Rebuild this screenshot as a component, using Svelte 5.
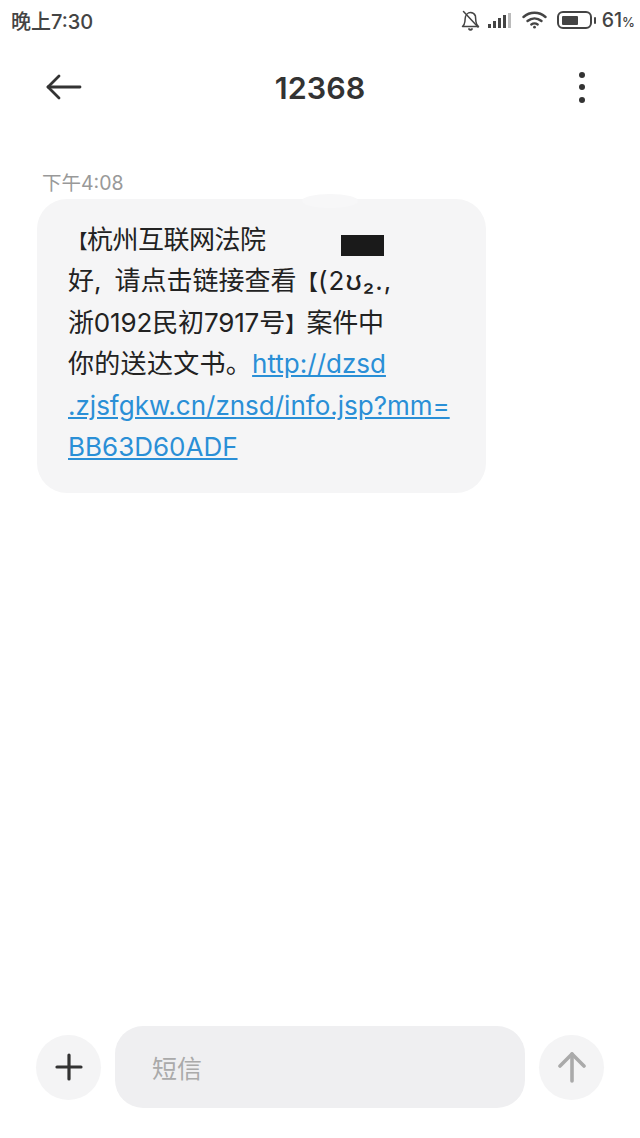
<script lang="ts">
	const statusTime = '晚上7:30';
	const bars = [4, 7, 10, 13, 15];
</script>

<div class="phone">
	<div class="status">
		<span class="time">{statusTime}</span>
		<div class="status__icons">
			<svg class="bell" width="20" height="21" viewBox="0 0 20 21" fill="none" stroke="#444" stroke-width="1.5" stroke-linecap="round" stroke-linejoin="round">
				<path d="M1.500 16.500c1.600-1.400 2.200-2.600 2.400-5l.3-3.200C4.500 5 6.800 2.600 9.500 2.600c2.200 0 4 1.300 4.900 3.300l.5 5.600c.2 2.300 1 3.700 2.600 5z" />
				<path d="M8 19c.6 1 2.400 1 3 0" stroke-width="1.800" />
				<path d="M2.500 1.500 17 17" />
			</svg>
			<div class="signal">
				{#each bars as h, i}
					<span class:dim={i === 4} style="height: {h}px"></span>
				{/each}
			</div>
			<svg class="wifi" width="25" height="18" viewBox="0 0 25 18" fill="none" stroke="#444" stroke-width="2.400" stroke-linecap="round">
				<path d="M1.500 6C7.900 .4 17.100 .4 23.500 6" />
				<path d="M5.500 10c4.200-3.400 9.800-3.400 14 0" />
				<path d="M9.300 13.400c2-1.300 4.400-1.300 6.400 0" />
				<circle cx="12.500" cy="16.200" r="1.400" fill="#444" stroke="none" />
			</svg>
			<div class="battery">
				<div class="battery__shell"><div class="battery__level"></div></div>
				<span class="battery__tip"></span>
			</div>
			<span class="percent">61<small>%</small></span>
		</div>
	</div>

	<header class="header">
		<svg width="36" height="26" viewBox="0 0 36 26" fill="none" stroke="#333" stroke-width="2.800" stroke-linecap="round" stroke-linejoin="round">
			<path d="M2 13h32" />
			<path d="M13 2 2 13l11 11" />
		</svg>
		<h1>12368</h1>
		<div class="more"><span></span><span></span><span></span></div>
	</header>

	<main class="thread">
		<div class="stamp">下午4:08</div>
		<div class="bubble">
			<span class="bump"></span>
			<div class="message">
				<div class="line line--tight"><span class="bracket">【</span>杭州互联网法院</div>
				<div class="line">好<span class="comma">,</span>请点击链接查看<span class="bracket">【</span><span class="smudge">(2ʊ₂.,</span></div>
				<div class="line line--snug">浙0192民初7917号<span class="bracket">】</span>案件中</div>
				<div class="line"><span class="wide">你的送达文书。</span><a href="#link">http://dzsd</a></div>
				<div class="line"><a href="#link">.zjsfgkw.cn/znsd/info.jsp?mm=</a></div>
				<div class="line"><a href="#link">BB63D60ADF</a></div>
			</div>
			<span class="redact"></span>
		</div>
	</main>

	<footer class="composer">
		<div class="round">
			<svg width="28" height="28" viewBox="0 0 28 28" fill="none" stroke="#333" stroke-width="3.200" stroke-linecap="round">
				<path d="M14 2v24" />
				<path d="M2 14h24" />
			</svg>
		</div>
		<div class="input">短信</div>
		<div class="round">
			<svg width="28" height="32" viewBox="0 0 28 32" fill="none" stroke="#aaa" stroke-width="3.600" stroke-linecap="round" stroke-linejoin="round">
				<path d="M14 3v27" />
				<path d="M2 15 14 3l12 12" />
			</svg>
		</div>
	</footer>
</div>

<style>
	:global(body) {
		margin: 0;
		background: #fff;
	}

	.phone {
		display: flex;
		flex-direction: column;
		height: 1138px;
		overflow: hidden;
		background: #fff;
		color: #222;
		font-family: Inter, 'Noto Sans CJK SC', sans-serif;
	}

	.status {
		display: flex;
		align-items: center;
		justify-content: space-between;
		height: 40px;
		padding: 0 5px 0 11px;
		color: #444;
	}

	.time {
		font-size: 20px;
		font-weight: 500;
	}

	.status__icons {
		display: flex;
		align-items: center;
	}

	.bell {
		margin-right: 7px;
	}

	.signal {
		display: flex;
		align-items: flex-end;
		gap: 2px;
		height: 16px;
		margin-right: 11px;
	}

	.signal span {
		width: 3px;
		background: #444;
	}

	.signal span.dim {
		background: #bbb;
	}

	.wifi {
		margin-right: 10px;
	}

	.battery {
		display: flex;
		align-items: center;
		margin-right: 6px;
	}

	.battery__shell {
		box-sizing: border-box;
		width: 35px;
		height: 18px;
		padding: 2.500px;
		border: 2px solid #444;
		border-radius: 6px;
	}

	.battery__level {
		width: 61%;
		height: 100%;
		border-radius: 1px;
		background: #444;
	}

	.battery__tip {
		width: 2px;
		height: 7px;
		margin-left: 1.500px;
		border-radius: 1px;
		background: #444;
	}

	.percent {
		font-size: 19.500px;
		font-weight: 500;
	}

	.percent small {
		font-size: 13px;
	}

	.header {
		display: grid;
		grid-template-columns: 1fr auto 1fr;
		align-items: center;
		height: 94px;
		padding: 0 55px 0 46px;
	}

	.header h1 {
		margin: 0 0 0 9px;
		color: #333;
		font-size: 30.500px;
		font-weight: 600;
	}

	.more {
		display: flex;
		flex-direction: column;
		gap: 6.500px;
		justify-self: end;
	}

	.more span {
		width: 6px;
		height: 6px;
		border-radius: 50%;
		background: #333;
	}

	.thread {
		flex: 1;
		padding: 31px 154px 0 37px;
	}

	.stamp {
		box-sizing: border-box;
		height: 31px;
		padding: 5px 0 0 5px;
		color: #999;
		font-size: 19.500px;
		line-height: 26px;
	}

	.bubble {
		position: relative;
		box-sizing: border-box;
		width: 449px;
		height: 294px;
		margin-top: 3px;
		padding: 20px 0 0 31px;
		border-radius: 30px;
		background: #f5f5f6;
	}

	.message {
		color: #222;
		font-size: 26px;
		white-space: nowrap;
	}

	.line {
		height: 41.400px;
		line-height: 41.400px;
	}

	.line--tight {
		letter-spacing: -0.5px;
	}

	.line--snug {
		letter-spacing: -0.15px;
	}

	.wide {
		letter-spacing: 0.3px;
	}

	.bracket {
		font-size: 19.500px;
	}

	.line:nth-child(2) .bracket,
	.line:nth-child(3) .bracket {
		font-size: 21.500px;
	}

	.comma {
		margin-right: 13px;
	}

	.smudge {
		letter-spacing: 1px;
	}

	.message a {
		color: #2a8fd6;
		text-decoration: underline;
		text-underline-offset: 2px;
	}

	.bump {
		position: absolute;
		top: -5px;
		left: 265px;
		width: 56px;
		height: 14px;
		border-radius: 50%;
		background: #f7f7f8;
	}

	.redact {
		position: absolute;
		top: 36px;
		left: 304px;
		width: 43px;
		height: 21px;
		background: #1a1a1a;
	}

	.composer {
		display: flex;
		align-items: center;
		gap: 14px;
		height: 82px;
		margin-bottom: 30px;
		padding: 0 36px;
	}

	.round {
		display: flex;
		flex: none;
		align-items: center;
		justify-content: center;
		width: 65px;
		height: 65px;
		border-radius: 50%;
		background: #f4f4f5;
	}

	.input {
		display: flex;
		flex: 1;
		align-items: center;
		height: 82px;
		padding-left: 37px;
		border-radius: 28px;
		background: #efeff1;
		color: #aaa;
		font-size: 25px;
	}
</style>
